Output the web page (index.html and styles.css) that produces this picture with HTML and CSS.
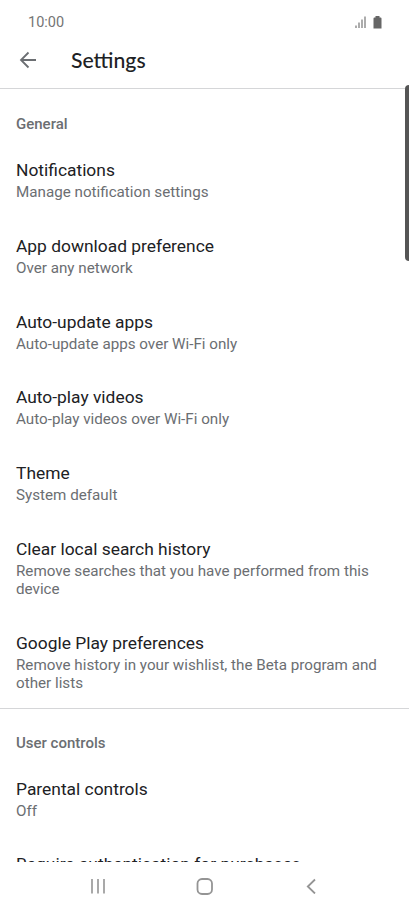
FILE: index.html
```html
<!DOCTYPE html>
<html lang="en">
<head>
  <meta charset="UTF-8">
  <meta name="viewport" content="width=device-width, initial-scale=1.0">
  <title>Settings</title>
  <link rel="stylesheet" href="styles.css">
</head>
<body>
  <div class="screen">
    <div class="status-bar">
      <span class="time">10:00</span>
      <svg class="signal" width="12" height="12" viewBox="0 0 12 12">
        <path d="M1 9.500v2.500M4 6.500v5.500M7 3.500v8.500M10 0.500v11.500" stroke="#808080" stroke-width="1.300"/>
      </svg>
      <svg class="battery" width="9" height="13" viewBox="0 0 9 13">
        <path d="M2.500 0h4v1.500H7.500a1 1 0 0 1 1 1V12.500H0.500V2.500a1 1 0 0 1 1-1h1z" fill="#666"/>
      </svg>
    </div>

    <header class="app-bar">
      <svg class="back" width="18" height="18" viewBox="0 0 18 18">
        <path d="M17 9H2.500M9.500 1.500L2 9L9.500 16.500" fill="none" stroke="#6b6e72" stroke-width="1.800"/>
      </svg>
      <h1>Settings</h1>
    </header>

    <main class="content">
      <!-- General -->
      <section class="group">
        <h2>General</h2>
        <div class="item">
          <h3>Notifications</h3>
          <p>Manage notification settings</p>
        </div>
        <div class="item">
          <h3>App download preference</h3>
          <p>Over any network</p>
        </div>
        <div class="item">
          <h3>Auto-update apps</h3>
          <p>Auto-update apps over Wi-Fi only</p>
        </div>
        <div class="item">
          <h3>Auto-play videos</h3>
          <p>Auto-play videos over Wi-Fi only</p>
        </div>
        <div class="item">
          <h3>Theme</h3>
          <p>System default</p>
        </div>
        <div class="item">
          <h3>Clear local search history</h3>
          <p>Remove searches that you have performed from this device</p>
        </div>
        <div class="item">
          <h3>Google Play preferences</h3>
          <p>Remove history in your wishlist, the Beta program and other lists</p>
        </div>
      </section>

      <!-- User controls -->
      <section class="group user-controls">
        <h2>User controls</h2>
        <div class="item">
          <h3>Parental controls</h3>
          <p>Off</p>
        </div>
        <div class="item">
          <h3>Require authentication for purchases</h3>
        </div>
      </section>
    </main>

    <nav class="nav-bar">
      <svg width="16" height="16" viewBox="0 0 16 16">
        <path d="M2 1v14.500M8 1v14.500M14 1v14.500" stroke="#949494" stroke-width="1.600"/>
      </svg>
      <svg width="18" height="18" viewBox="0 0 18 18">
        <rect x="1.500" y="2" width="14.500" height="15" rx="4.500" fill="none" stroke="#949494" stroke-width="1.800"/>
      </svg>
      <svg width="16" height="16" viewBox="0 0 16 16">
        <path d="M12 1.500L4.800 8.500L12 15.500" fill="none" stroke="#949494" stroke-width="1.800"/>
      </svg>
    </nav>

    <div class="edge-handle"></div>
  </div>
</body>
</html>
```

FILE: styles.css
```css
* {
  box-sizing: border-box;
}

body {
  margin: 0;
  background-color: #fff;
  font-family: Roboto, sans-serif;
}

h1, h2, h3, p {
  margin: 0;
}

.screen {
  position: relative;
  display: flex;
  flex-direction: column;
  width: 409px;
  height: 910px;
  overflow: hidden;
}

/* Status bar */
.status-bar {
  display: flex;
  align-items: center;
  height: 33px;
  padding: 11px 27px 0 28px;
}

.time {
  flex-grow: 1;
  padding-top: 1px;
  font-size: 14.5px;
  color: #757575;
}

.battery {
  margin-left: 6px;
}

/* App bar */
.app-bar {
  display: flex;
  align-items: center;
  height: 56px;
  padding: 0 19px 2px;
  border-bottom: 1px solid #d5d6d8;
}

.app-bar h1 {
  margin-left: 34px;
  font-family: Lato, sans-serif;
  font-size: 21.2px;
  line-height: 26px;
  font-weight: 500;
  color: #202124;
}

/* Settings list */
.content {
  flex: 1;
  min-height: 0;
  overflow: hidden;
}

.group {
  padding: 26px 16px 0;
}

.group + .group {
  padding-top: 25px;
  border-top: 1px solid #d5d6d8;
}

.group h2 {
  margin-bottom: 25px;
  font-size: 15px;
  line-height: 18px;
  font-weight: 500;
  color: #6b6e72;
}

.item {
  padding-bottom: 32.8px;
}

.item:last-child {
  padding-bottom: 16px;
}

.user-controls .item {
  padding-bottom: 31.8px;
}

.item h3 {
  margin-bottom: 1px;
  font-size: 17.4px;
  line-height: 24px;
  font-weight: 400;
  color: #202124;
}

.item p {
  font-size: 15.2px;
  line-height: 18px;
  color: #6b6e72;
}

/* Navigation bar */
.nav-bar {
  display: flex;
  align-items: center;
  justify-content: space-between;
  height: 48px;
  padding: 0 90px;
}

.edge-handle {
  position: absolute;
  top: 85px;
  right: 0;
  width: 4px;
  height: 176px;
  border-radius: 4px 0 0 4px;
  background-color: #555;
}
```
